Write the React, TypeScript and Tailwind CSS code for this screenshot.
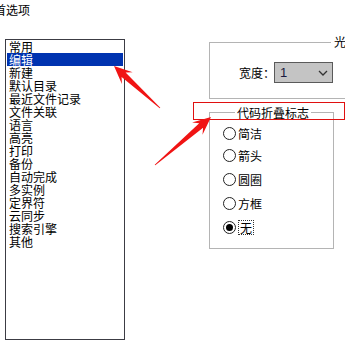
import React from "react";

const items = [
  "常用",
  "编辑",
  "新建",
  "默认目录",
  "最近文件记录",
  "文件关联",
  "语言",
  "高亮",
  "打印",
  "备份",
  "自动完成",
  "多实例",
  "定界符",
  "云同步",
  "搜索引擎",
  "其他",
];

function arrowPoints(tx: number, ty: number, sx: number, sy: number) {
  const dx = tx - sx;
  const dy = ty - sy;
  const len = Math.hypot(dx, dy);
  const ux = dx / len;
  const uy = dy / len;
  const px = -uy;
  const py = ux;
  const headLen = 18;
  const headHalf = 8;
  const neckHalf = 3;
  const bx = tx - ux * headLen;
  const by = ty - uy * headLen;
  const nx = tx - ux * (headLen - 5);
  const ny = ty - uy * (headLen - 5);
  const pts: [number, number][] = [
    [sx + px * 0.4, sy + py * 0.4],
    [nx + px * neckHalf, ny + py * neckHalf],
    [bx + px * headHalf, by + py * headHalf],
    [tx, ty],
    [bx - px * headHalf, by - py * headHalf],
    [nx - px * neckHalf, ny - py * neckHalf],
    [sx - px * 0.4, sy - py * 0.4],
  ];
  return pts.map((p) => `${p[0].toFixed(1)},${p[1].toFixed(1)}`).join(" ");
}

function Radio({ checked }: { checked?: boolean }) {
  return (
    <span className="relative flex h-[13px] w-[13px] shrink-0 items-center justify-center rounded-full border-[1.5px] border-[#222] bg-white">
      {checked && <span className="h-[7px] w-[7px] rounded-full bg-black" />}
    </span>
  );
}

export default function App() {
  const font = {
    fontFamily: '"Noto Sans CJK SC", "Noto Sans", sans-serif',
  };
  return (
    <div
      className="relative h-[350px] w-[345px] overflow-hidden bg-white text-[12px] leading-[13px] text-black"
      style={font}
    >
      <div className="ml-[-6px] whitespace-nowrap pt-[3px]">首选项</div>

      <div className="mt-[23px] flex items-start">
        {/* list box */}
        <div className="ml-[5px] h-[301px] w-[120px] shrink-0 border border-[#3c3c44] bg-white">
          {items.map((it, i) => (
            <div
              key={it}
              className={
                i === 1
                  ? "mx-[1px] h-[13px] bg-[#0033b0] pl-[2px] text-white"
                  : "mx-[1px] h-[13px] pl-[2px]"
              }
            >
              {it}
            </div>
          ))}
        </div>

        {/* right column */}
        <div className="ml-[84px] flex w-[160px] shrink-0 flex-col">
          {/* group 1 */}
          <div className="relative mt-[3px] h-[57px] w-[160px] border border-[#b4b4b4]">
            <span className="absolute left-[121px] top-[-8px] whitespace-nowrap bg-white px-[3px]">
              光标
            </span>
            <div className="flex items-center pl-[29px] pt-[19px]">
              <span className="w-[35px] whitespace-nowrap">宽度：</span>
              <div className="flex h-[21px] w-[59px] items-center justify-between border border-[#5a5a5a] bg-[#c4c4c4] pl-[5px] pr-[4px]">
                <span className="text-[13px] text-[#1a1a40]" style={{ fontFamily: '"Liberation Sans", sans-serif' }}>
                  1
                </span>
                <svg width="10" height="6" viewBox="0 0 10 6">
                  <path d="M1 1 L5 5 L9 1" fill="none" stroke="#333" strokeWidth="1.3" />
                </svg>
              </div>
            </div>
          </div>

          {/* group 2 */}
          <div className="relative mt-[13px] h-[137px] w-[125px] border border-[#b4b4b4]">
            <span className="absolute left-[25px] top-[-7px] whitespace-nowrap bg-white px-[2px]">
              代码折叠标志
            </span>
            <div className="flex flex-col pl-[13px] pt-[14px]">
              <div className="flex h-[13px] items-center gap-[2px]">
                <Radio />
                <span>简洁</span>
              </div>
              <div className="mt-[9px] flex h-[13px] items-center gap-[2px]">
                <Radio />
                <span>箭头</span>
              </div>
              <div className="mt-[11px] flex h-[13px] items-center gap-[2px]">
                <Radio />
                <span>圆圈</span>
              </div>
              <div className="mt-[11px] flex h-[13px] items-center gap-[2px]">
                <Radio />
                <span>方框</span>
              </div>
              <div className="mt-[11px] flex h-[13px] items-center gap-[2px]">
                <Radio checked />
                <span className="border border-dotted border-[#333] px-[1px] leading-[13px]">无</span>
              </div>
            </div>
          </div>
        </div>
      </div>

      {/* red highlight rectangle */}
      <div className="absolute left-[193px] top-[102px] h-[18px] w-[152px] border border-[#e01010]" />

      {/* arrows */}
      <svg className="pointer-events-none absolute left-0 top-0" width="345" height="350">
        <polygon points={arrowPoints(114, 66, 160, 108)} fill="#f01414" />
        <polygon points={arrowPoints(211, 117, 155, 165)} fill="#f01414" />
      </svg>
    </div>
  );
}
